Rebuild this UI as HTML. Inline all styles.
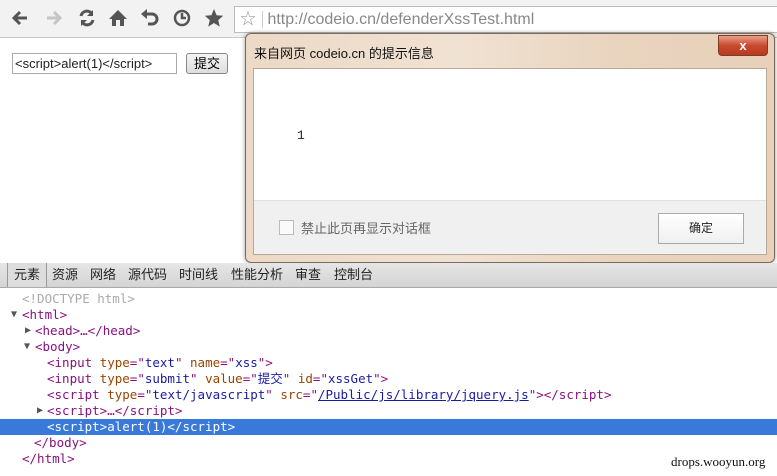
<!DOCTYPE html><html><head><meta charset="utf-8"><style>
*{margin:0;padding:0;box-sizing:border-box}
body{width:777px;height:476px;position:relative;overflow:hidden;background:#fff;font-family:"Liberation Sans","Noto Sans CJK SC",sans-serif}
.tb{position:absolute;left:0;top:0;width:777px;height:38px;background:#f2f2f2;border-bottom:1px solid #c8c8c8}
.ic{position:absolute;top:8px}
.addr{position:absolute;left:234px;top:6px;width:550px;height:27px;background:#fff;border:1px solid #bdbdbd;font-size:16px;color:#888;line-height:25px}
.inp{position:absolute;left:12px;top:53px;width:165px;height:21px;border:1px solid #aaa;font-size:13px;line-height:19px;padding-left:2px;color:#222}
.btn{position:absolute;left:186px;top:53px;width:42px;height:21px;border:1px solid #888;border-radius:3px;background:linear-gradient(#f5f5f5,#ddd);font-size:13px;text-align:center;line-height:19px}
.dlg{position:absolute;left:245px;top:33px;width:530px;height:230px;border-radius:6px;border:1px solid #7a6a5a;background:linear-gradient(90deg,#ecd9c6,#f0e2d2 40%,#e9d4bf 70%,#e8d0ba);box-shadow:0 0 4px rgba(0,0,0,.4)}
.dt{position:absolute;left:8px;top:9px;font-size:13px;color:#111}
.x{position:absolute;left:472px;top:1px;width:50px;height:21px;border-radius:0 0 4px 4px;background:linear-gradient(#e8a08c,#c94a2f 50%,#b83a20);border:1px solid #7c3a2a;color:#fff;font-weight:bold;text-align:center;font-size:13px;line-height:19px}
.in{position:absolute;left:7px;top:34px;width:514px;height:187px;background:#fff;border:1px solid #b8a898}
.ft{position:absolute;left:0;top:131px;width:512px;height:54px;background:#f0f0f0;border-top:1px solid #e0e0e0}
.tabs{position:absolute;left:0;top:263px;width:777px;height:25px;background:linear-gradient(#e6e6e6,#d4d4d4);border-bottom:1px solid #aaa;font-size:13px;line-height:24px;color:#222}
.tabs span{position:absolute;top:0}
.code{position:absolute;left:0;top:291px;width:777px;font-family:"DejaVu Sans Mono","Liberation Mono","Noto Sans CJK SC",monospace;font-size:12.5px;line-height:16px;color:#881280}
.code div{height:16px;white-space:pre;position:relative}
.code i{font-style:normal;position:absolute;top:0;color:#555;font-size:10px}
.a{color:#994500}.v{color:#1a1aa6}.g{color:#aaa}
.sel{background:#3879d9;color:#fff}
</style></head><body>
<div class="tb">
<svg class="ic" style="left:10px" width="20" height="20" viewBox="0 0 20 20"><path d="M17 10H5M10 4L4 10l6 6" stroke="#555" stroke-width="3" fill="none"/></svg>
<svg class="ic" style="left:44px" width="20" height="20" viewBox="0 0 20 20"><path d="M3 10h12M10 4l6 6-6 6" stroke="#c4c4c4" stroke-width="3" fill="none"/></svg>
<svg class="ic" style="left:77px" width="20" height="20" viewBox="0 0 20 20"><path d="M4 8a6 6 0 0 1 11-2M16 12a6 6 0 0 1-11 2" stroke="#555" stroke-width="3" fill="none"/><path d="M16 2v6h-6zM4 18v-6h6z" fill="#555"/></svg>
<svg class="ic" style="left:108px" width="20" height="20" viewBox="0 0 20 20"><path d="M10 2L1 11h3v7h12v-7h3z" fill="#555"/><rect x="8" y="12" width="4" height="6" fill="#f2f2f2"/></svg>
<svg class="ic" style="left:140px" width="20" height="20" viewBox="0 0 20 20"><path d="M6 6h6a5 5 0 0 1 0 10H8" stroke="#555" stroke-width="3" fill="none"/><path d="M7 1v10L1 6z" fill="#555"/></svg>
<svg class="ic" style="left:172px" width="20" height="20" viewBox="0 0 20 20"><circle cx="10" cy="10" r="7" stroke="#555" stroke-width="2.5" fill="none"/><path d="M10 5v5h4" stroke="#555" stroke-width="2.5" fill="none"/></svg>
<svg class="ic" style="left:204px" width="20" height="20" viewBox="0 0 20 20"><path d="M10 1l2.6 6.2 6.6.5-5 4.4 1.6 6.5L10 15l-5.8 3.6 1.6-6.5-5-4.4 6.6-.5z" fill="#555"/></svg>
<div class="addr"><span style="color:#999;padding:0 6px 0 5px;border-right:1px solid #ccc">&#9734;</span> http://codeio.cn/defenderXssTest.html</div>
</div>
<div class="inp">&lt;script&gt;alert(1)&lt;/script&gt;</div>
<div class="btn">提交</div>
<div class="dlg">
<div class="dt">来自网页 codeio.cn 的提示信息</div>
<div class="x">x</div>
<div class="in">
<div style="position:absolute;left:43px;top:59px;font-family:'Liberation Mono',monospace;font-size:13px;color:#222">1</div>
<div class="ft">
<div style="position:absolute;left:25px;top:19px;width:15px;height:15px;border:1px solid #bbb;background:#fafafa"></div>
<div style="position:absolute;left:47px;top:17px;font-size:13px;color:#666">禁止此页再显示对话框</div>
<div style="position:absolute;left:404px;top:12px;width:86px;height:31px;border:1px solid #aaa;background:linear-gradient(#fff,#f0f0f0);font-size:12px;text-align:center;line-height:29px;color:#222">确定</div>
</div></div></div>
<div class="tabs"><span style="left:7px;width:40px;height:24px;border-left:1px solid #999;border-right:1px solid #999;background:#ddd;text-align:center">元素</span><span style="left:52px">资源</span><span style="left:90px">网络</span><span style="left:128px">源代码</span><span style="left:179px">时间线</span><span style="left:231px">性能分析</span><span style="left:295px">审查</span><span style="left:334px">控制台</span></div>
<div class="code">
<div class="g" style="padding-left:22px">&lt;!DOCTYPE html&gt;</div>
<div style="padding-left:22px"><i style="left:11px">▼</i>&lt;html&gt;</div>
<div style="padding-left:35px"><i style="left:25px">▶</i>&lt;head&gt;…&lt;/head&gt;</div>
<div style="padding-left:35px"><i style="left:24px">▼</i>&lt;body&gt;</div>
<div style="padding-left:47px">&lt;input <span class="a">type</span>="<span class="v">text</span>" <span class="a">name</span>="<span class="v">xss</span>"&gt;</div>
<div style="padding-left:47px">&lt;input <span class="a">type</span>="<span class="v">submit</span>" <span class="a">value</span>="<span class="v">提交</span>" <span class="a">id</span>="<span class="v">xssGet</span>"&gt;</div>
<div style="padding-left:47px">&lt;script <span class="a">type</span>="<span class="v">text/javascript</span>" <span class="a">src</span>="<span class="v" style="text-decoration:underline">/Public/js/library/jquery.js</span>"&gt;&lt;/script&gt;</div>
<div style="padding-left:47px"><i style="left:37px">▶</i>&lt;script&gt;…&lt;/script&gt;</div>
<div class="sel" style="padding-left:47px">&lt;script&gt;alert(1)&lt;/script&gt;</div>
<div style="padding-left:34px">&lt;/body&gt;</div>
<div style="padding-left:22px">&lt;/html&gt;</div>
</div>
<div style="position:absolute;left:671px;top:454px;font-family:'Liberation Serif',serif;font-size:13px;color:#111">drops.wooyun.org</div>
</body></html>
